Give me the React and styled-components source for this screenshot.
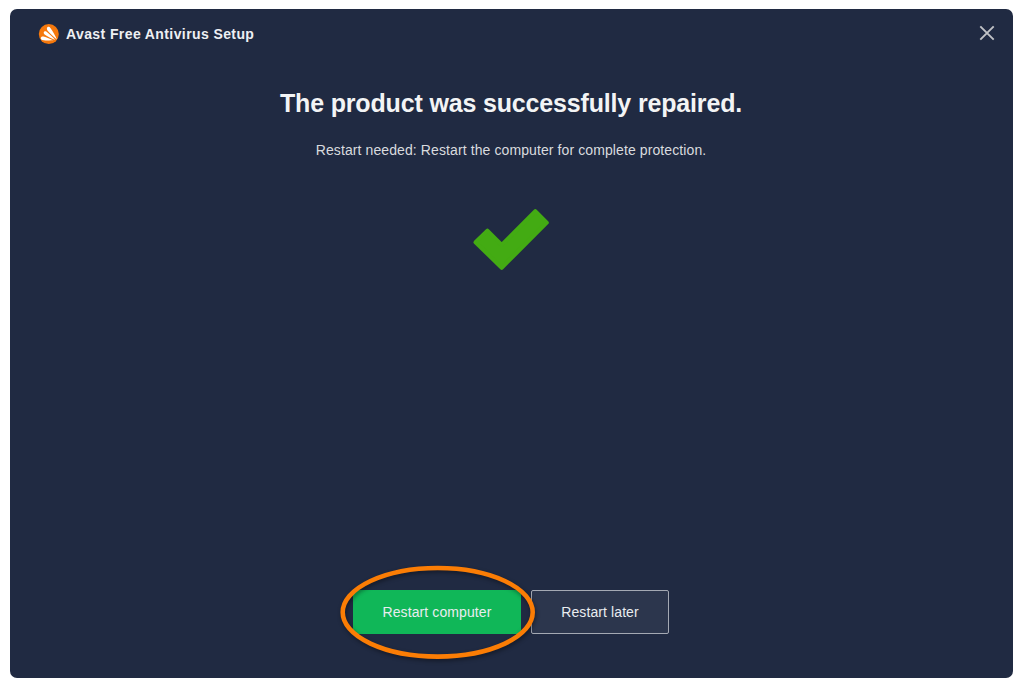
import React from 'react';
import styled, { createGlobalStyle } from 'styled-components';

const GlobalStyle = createGlobalStyle`
  * {
    box-sizing: border-box;
  }

  body {
    margin: 0;
    background-color: #fff;
    font-family: 'Liberation Sans', Arial, sans-serif;
  }
`;

const Page = styled.div`
  height: 690px;
  padding: 9px 11px 12px 10px;
`;

const SetupWindow = styled.div`
  display: flex;
  flex-direction: column;
  height: 669px;
  border-radius: 7px;
  background-color: #202a42;
`;

const TitleBar = styled.header`
  display: flex;
  align-items: center;
  height: 50px;
  padding: 0 18px 0 28px;
`;

const Title = styled.div`
  flex: 1;
  margin-left: 7px;
  font-size: 14px;
  line-height: 20px;
  font-weight: 700;
  letter-spacing: 0.4px;
  color: #eef0f3;
`;

const CloseButton = styled.button`
  display: flex;
  margin-bottom: 2px;
  padding: 0;
  border: none;
  background: none;
`;

const Content = styled.main`
  flex: 1;
  display: flex;
  flex-direction: column;
  align-items: center;
  padding: 28px 1px 0 0;
`;

const Heading = styled.h1`
  margin: 0;
  font-size: 25px;
  line-height: 32px;
  font-weight: 700;
  letter-spacing: -0.16px;
  white-space: nowrap;
  color: #f3f4f5;
`;

const Message = styled.p`
  margin: 21px 0 0;
  font-size: 14px;
  line-height: 20px;
  letter-spacing: 0.1px;
  white-space: nowrap;
  color: #d9dbdf;
`;

const CheckMark = styled.svg`
  display: block;
  margin-top: 47px;
`;

const Actions = styled.footer`
  display: flex;
  justify-content: center;
  gap: 10px;
  padding: 0 1px 44px 0;
`;

const ActionButton = styled.button`
  width: ${({ $primary }) => ($primary ? '168px' : '138px')};
  height: 44px;
  padding: 0;
  border: ${({ $primary }) => ($primary ? 'none' : '1px solid #a4a9b3')};
  border-radius: ${({ $primary }) => ($primary ? '0' : '2px')};
  background-color: ${({ $primary }) => ($primary ? '#10b758' : '#2c364d')};
  font-family: inherit;
  font-size: 14px;
  letter-spacing: 0.1px;
  color: #e9edf0;
`;

const Highlighted = styled.div`
  position: relative;
  display: flex;
`;

const HighlightRing = styled.svg`
  position: absolute;
  top: -30px;
  left: -18px;
  filter: drop-shadow(1px 2px 2px rgba(0, 0, 0, 0.4));
  pointer-events: none;
`;

const AvastLogo = () => (
  <svg width="21" height="21" viewBox="0 0 21 21">
    <circle cx="10.8" cy="10.1" r="10" fill="#f5780c" />
    <g fill="#fff">
      <path d="M8.900 4.600C8.900 2.600 11.300 2.200 12.400 3.900C15 7.700 17.400 11.500 19 15.700C15.700 12.900 12.300 9.600 9.600 6.700C9 6 8.900 5.300 8.900 4.600z" />
      <path d="M5.700 8.500C6 7.200 7.500 6.800 8.600 7.700C11.800 10.300 14.800 13 17.200 15.900C13.500 14.300 9.600 12.400 6.600 10.400C5.900 9.900 5.600 9.200 5.700 8.500z" />
      <path d="M2.800 14.200C2.900 12.800 4 12.100 5.500 12.500C8.900 13.400 12.300 14.700 15.200 16.300C11.500 16.600 7.500 16.500 4.200 15.900C3.300 15.700 2.800 15.100 2.800 14.200z" />
    </g>
  </svg>
);

const App = () => {
  return (
    <>
      <GlobalStyle />
      <Page>
        <SetupWindow>
          <TitleBar>
            <AvastLogo />
            <Title>Avast Free Antivirus Setup</Title>
            <CloseButton aria-label="Close">
              <svg width="16" height="16" viewBox="0 0 16 16">
                <path d="M1.300 1.300L14.700 14.700M14.700 1.300L1.300 14.700" stroke="#c0c2c6" strokeWidth="1.900" fill="none" />
              </svg>
            </CloseButton>
          </TitleBar>
          <Content>
            <Heading>The product was successfully repaired.</Heading>
            <Message>Restart needed: Restart the computer for complete protection.</Message>
            <CheckMark width="78" height="66" viewBox="0 0 78 66">
              <path
                d="M3.500 35.300L15.400 23.700L29.700 38L63.300 4.200L74.800 15.700L29.700 60.800Z"
                fill="#43ab13"
                stroke="#43ab13"
                strokeWidth="4"
                strokeLinejoin="round"
              />
            </CheckMark>
          </Content>
          <Actions>
            <Highlighted>
              <ActionButton $primary>Restart computer</ActionButton>
              <HighlightRing width="206" height="106" viewBox="0 0 206 106">
                <ellipse cx="102.700" cy="52.300" rx="95" ry="44.300" fill="none" stroke="#fb7d05" strokeWidth="4.600" />
              </HighlightRing>
            </Highlighted>
            <ActionButton>Restart later</ActionButton>
          </Actions>
        </SetupWindow>
      </Page>
    </>
  );
};

export default App;
